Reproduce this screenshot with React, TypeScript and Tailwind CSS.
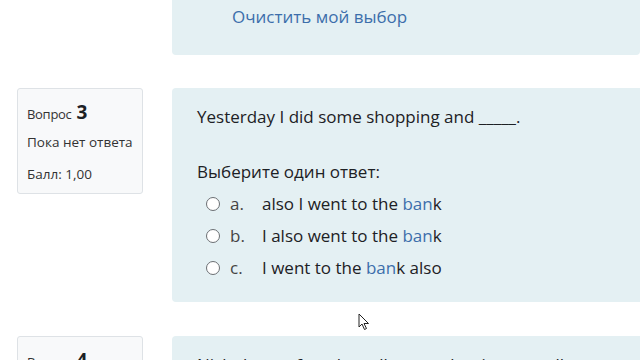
import { ReactNode } from 'react';

const font = { fontFamily: '"Open Sans", "Noto Sans", sans-serif' };

interface Option {
  letter: string;
  text: ReactNode;
}

const Bank = () => <span className="text-[#3c6eab]">ban</span>;

const options: Option[] = [
  { letter: 'a.', text: <>also I went to the <Bank />k</> },
  { letter: 'b.', text: <>I also went to the <Bank />k</> },
  { letter: 'c.', text: <>I went to the <Bank />k also</> },
];

function InfoBox({ num, lines }: { num: number; lines: string[] }) {
  return (
    <div className="w-[126px] shrink-0 self-start rounded-[3px] border border-[#dee2e6] bg-[#f8f9fa] px-[9px] pt-[11px] pb-[9px] text-[#333]">
      <div className="flex items-baseline gap-[5px] leading-[24px]">
        <span className="text-[13px] tracking-[-0.3px]">Вопрос</span>
        <span className="text-[19px] font-bold text-[#1d2125]">{num}</span>
      </div>
      {lines.map((l, i) => (
        <div key={i} className={`text-[13.5px] leading-[20px] ${i === 0 ? 'mt-[6px]' : 'mt-[12px]'}`}>
          {l}
        </div>
      ))}
    </div>
  );
}

function Radio() {
  return <span className="inline-block h-[14px] w-[14px] rounded-full border-[1.5px] border-[#6b6f73] bg-white" />;
}

export default function App() {
  return (
    <div className="relative h-[360px] w-[640px] overflow-hidden bg-white" style={font}>
      <div className="ml-[172px] h-[55px] rounded-b-[4px] bg-[#e4f0f3] pl-[60px] pt-[5px]">
        <span className="text-[17px] leading-[24px] text-[#3c6eab]">Очистить мой выбор</span>
      </div>

      <div className="mt-[33px] flex gap-[29px] pl-[17px]">
        <InfoBox num={3} lines={['Пока нет ответа', 'Балл: 1,00']} />
        <div className="h-[214px] flex-1 rounded-l-[4px] bg-[#e4f0f3] pl-[25px] pt-[16px] text-[17px] text-[#1d2125]">
          <p className="leading-[26px]">Yesterday I did some shopping and _____.</p>
          <p className="mt-[29px] leading-[26px]">Выберите один ответ:</p>
          <div className="mt-[3px] flex flex-col">
            {options.map((o) => (
              <div key={o.letter} className="flex h-[32px] items-center pl-[9px]">
                <Radio />
                <span className="ml-[10px] w-[32px] text-[#444]">{o.letter}</span>
                <span>{o.text}</span>
              </div>
            ))}
          </div>
        </div>
      </div>

      <div className="mt-[34px] flex gap-[29px] pl-[17px]">
        <InfoBox num={4} lines={['Пока нет ответа', 'Балл: 1,00']} />
        <div className="h-[214px] flex-1 rounded-l-[4px] bg-[#e4f0f3] pl-[25px] pt-[16px] text-[17px] text-[#1d2125]">
          <p className="leading-[26px]">Nicholas prefers the yellow one but is not really sure. Nick</p>
        </div>
      </div>

      <svg className="absolute left-[358px] top-[313px]" width="12" height="18" viewBox="0 0 12 18">
        <path d="M1 1 L1 14 L4 11 L6.5 16.5 L8.5 15.5 L6 10.5 L10.5 10.5 Z" fill="white" stroke="#222" strokeWidth="1" strokeLinejoin="round" />
      </svg>
    </div>
  );
}
